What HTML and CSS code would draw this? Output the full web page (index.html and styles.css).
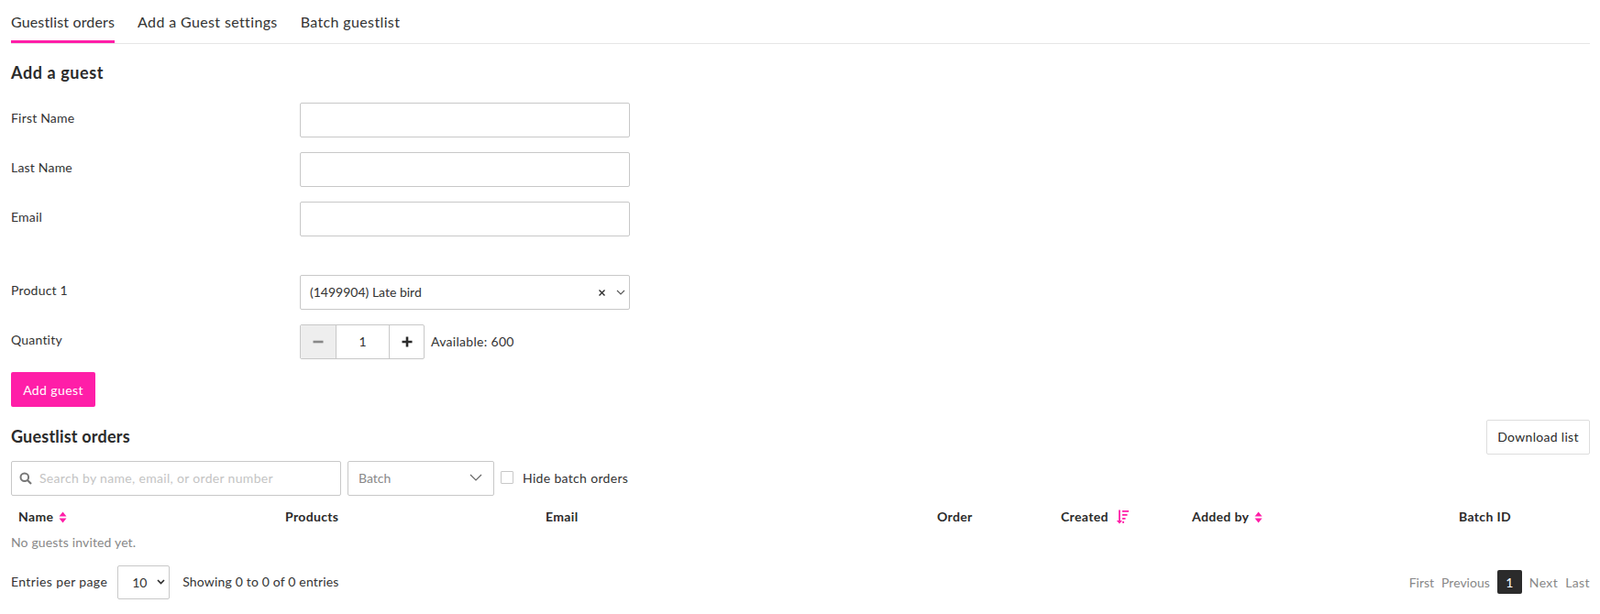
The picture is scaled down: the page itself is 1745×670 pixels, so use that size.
FILE: index.html
```html
<!DOCTYPE html>
<html lang="en">
<head>
<meta charset="utf-8">
<title>Guestlist orders</title>
<link rel="stylesheet" href="styles.css">
</head>
<body>
<main class="page">
  <nav class="tabs">
    <a class="tab active">Guestlist orders</a>
    <a class="tab">Add a Guest settings</a>
    <a class="tab">Batch guestlist</a>
  </nav>

  <h2 class="add-title">Add a guest</h2>
  <form class="form">
    <div class="row"><label>First Name</label><input class="field" type="text"></div>
    <div class="row"><label>Last Name</label><input class="field" type="text"></div>
    <div class="row"><label>Email</label><input class="field" type="text"></div>
    <div class="row product"><label>Product 1</label>
      <div class="field combo">
        <span class="combo-text">(1499904) Late bird</span>
        <svg class="combo-x" width="9" height="9" viewBox="0 0 9 9"><path d="M1.5 1.5l6 6M7.5 1.5l-6 6" stroke="#2b2b2b" stroke-width="1.4" fill="none"/></svg>
        <svg class="combo-chev" width="10" height="6" viewBox="0 0 10 6"><path d="M1 1l4 4 4-4" stroke="#555" stroke-width="1.1" fill="none"/></svg>
      </div>
    </div>
    <div class="row"><label>Quantity</label>
      <div class="qty-wrap">
        <div class="qty">
          <span class="qty-btn minus"><svg width="12" height="12" viewBox="0 0 12 12"><rect x="0.5" y="4.7" width="11" height="2.6" fill="#888"/></svg></span>
          <span class="qty-val">1</span>
          <span class="qty-btn"><svg width="12" height="12" viewBox="0 0 12 12"><path d="M4.7 0.5h2.6v4.2h4.2v2.6H7.3v4.2H4.7V7.3H0.5V4.7h4.2z" fill="#2b2b2b"/></svg></span>
        </div>
        <span class="avail">Available: 600</span>
      </div>
    </div>
    <button class="add-btn" type="button">Add guest</button>
  </form>

  <section class="list">
    <div class="list-head">
      <h2 class="list-title">Guestlist orders</h2>
      <button class="download" type="button">Download list</button>
    </div>
    <div class="filters">
      <div class="search">
        <svg width="14" height="14" viewBox="0 0 14 14"><circle cx="5.8" cy="5.8" r="4.3" stroke="#777" stroke-width="2" fill="none"/><path d="M9 9l4 4" stroke="#777" stroke-width="2.2" fill="none"/></svg>
        <input class="search-input" type="text" placeholder="Search by name, email, or order number">
      </div>
      <div class="batch">
        <span>Batch</span>
        <svg width="14" height="8" viewBox="0 0 14 8"><path d="M1 1l6 6 6-6" stroke="#666" stroke-width="1.2" fill="none"/></svg>
      </div>
      <label class="hide"><span class="check"></span><span class="hide-text">Hide batch orders</span></label>
    </div>
    <table class="grid">
      <colgroup>
        <col class="c-name"><col class="c-products"><col class="c-email"><col class="c-order"><col class="c-created"><col class="c-added"><col class="c-batch">
      </colgroup>
      <thead>
        <tr>
          <th>Name <svg class="sort" width="9" height="13" viewBox="0 0 9 13"><path d="M4.5 0.5L8.5 5.5H0.5zM4.5 12.5L0.5 7.5H8.5z" fill="#ff1ea8"/></svg></th>
          <th>Products</th>
          <th>Email</th>
          <th>Order</th>
          <th>Created <svg class="sort sort-d" width="15" height="16" viewBox="0 0 15 16"><path d="M3 0.5h1.8v11.5H7L3.9 15.5 0.8 12H3z M7 1h7v1.8H7z M7 5h5.5v1.8H7z M7 9h3.5v1.8H7z M7 13h2v1.8H7z" fill="#ff1ea8"/></svg></th>
          <th>Added by <svg class="sort" width="9" height="13" viewBox="0 0 9 13"><path d="M4.5 0.5L8.5 5.5H0.5zM4.5 12.5L0.5 7.5H8.5z" fill="#ff1ea8"/></svg></th>
          <th>Batch ID</th>
        </tr>
      </thead>
    </table>
    <p class="empty">No guests invited yet.</p>
    <div class="foot">
      <span class="per-label">Entries per page</span>
      <div class="per-page"><span>10</span><svg width="9" height="6" viewBox="0 0 9 6"><path d="M1 1l3.5 3.5L8 1" stroke="#2b2b2b" stroke-width="1.6" fill="none"/></svg></div>
      <span class="showing">Showing 0 to 0 of 0 entries</span>
      <div class="pager">
        <a>First</a><a>Previous</a><a class="current">1</a><a>Next</a><a>Last</a>
      </div>
    </div>
  </section>
</main>
</body>
</html>
```
FILE: styles.css
```css
* { box-sizing: border-box; }
html, body { margin: 0; padding: 0; background: #fff; }
body { font-family: Lato, "Liberation Sans", sans-serif; font-size: 14px; color: #333; }
.page { width: 1745px; height: 670px; padding: 0 12px; overflow: hidden; }
.tabs { display: flex; gap: 25px; height: 48px; border-bottom: 1px solid #e6e6e6; width: 1722px; }
.tab { height: 47px; padding-top: 14px; font-size: 16px; line-height: 20px; letter-spacing: 0.37px; }
.tab.active { border-bottom: 3px solid #ff1ea8; letter-spacing: 0.15px; }
h2 { margin: 0; font-size: 18px; font-weight: 700; line-height: 22px; color: #2b2b2b; }
.add-title { margin-top: 20px; letter-spacing: 0.6px; }
.form { display: flex; flex-direction: column; margin-top: 22px; }
.row { display: grid; grid-template-columns: 315px 360px; height: 38px; margin-bottom: 16px; }
.row label { font-size: 14px; line-height: 20px; padding-top: 7px; letter-spacing: 0.2px; }
.row.product { margin-top: 26px; }
.field { width: 360px; height: 38px; border: 1px solid #c8c8c8; border-radius: 2px; background: #fff; }
.combo { display: flex; align-items: center; padding: 0 4px 0 10px; font-size: 14px; }
.combo-text { flex: 1; margin-top: -2px; }
.combo-x { margin-right: 11px; }
.qty-wrap { display: flex; align-items: center; gap: 7px; }
.qty { display: flex; width: 136px; height: 38px; border: 1px solid #c8c8c8; border-radius: 2px; }
.qty-btn { width: 39px; display: flex; align-items: center; justify-content: center; }
.qty-btn.minus { background: #eee; border-right: 1px solid #c8c8c8; }
.qty-val { width: 58px; border-right: 1px solid #c8c8c8; text-align: center; line-height: 36px; font-size: 14px; }
.qty .qty-btn:last-child { width: 37px; }
.avail { font-size: 14px; letter-spacing: 0.3px; margin-top: -2px; }
.add-btn { width: 92px; height: 38px; margin-top: -2px; padding: 0; border: 0; border-radius: 2px; background: #ff1ea8; color: #fff; font: inherit; letter-spacing: 0.4px; }
.list { margin-top: 14px; }
.list-head { display: flex; justify-content: space-between; align-items: center; height: 38px; width: 1722px; }
.list-title { letter-spacing: 0.2px; margin-top: -2px; }
.download { width: 113px; height: 38px; padding: 0 0 2px; border: 1px solid #ddd; border-radius: 2px; background: #fff; color: #2b2b2b; font: inherit; letter-spacing: 0.3px; }
.filters { display: flex; align-items: center; gap: 7px; margin-top: 7px; }
.search { display: flex; align-items: center; gap: 8px; width: 360px; height: 38px; padding: 0 8px; border: 1px solid #c8c8c8; border-radius: 2px; }
.search-input { flex: 1; min-width: 0; border: 0; outline: 0; padding: 0 0 2px; font: inherit; letter-spacing: 0.32px; }
.search-input::placeholder { color: #c4c4c4; opacity: 1; }
.batch { display: flex; align-items: center; justify-content: space-between; width: 160px; height: 38px; padding: 0 12px 2px 11px; border: 1px solid #c8c8c8; border-radius: 2px; color: #888; }
.hide { display: flex; align-items: center; gap: 10px; letter-spacing: 0.33px; }
.hide-text { margin-top: -2px; }
.check { width: 14px; height: 14px; margin-top: -2px; border: 1px solid #c8c8c8; border-radius: 1px; }
.grid { width: 1721px; border-collapse: collapse; table-layout: fixed; margin-top: 12px; }
.c-name { width: 291px; } .c-products { width: 284px; } .c-email { width: 427px; } .c-order { width: 135px; } .c-created { width: 143px; } .c-added { width: 291px; } .c-batch { width: 150px; }
.grid th { text-align: left; padding: 0 8px; height: 22px; font-size: 14px; font-weight: 700; line-height: 20px; white-space: nowrap; letter-spacing: 0.35px; color: #2b2b2b; }
.sort { vertical-align: -2px; margin-left: 2px; }
.sort-d { vertical-align: -3px; margin-left: 4px; }
.empty { margin: 7px 0 0; color: #888; font-size: 14px; line-height: 20px; letter-spacing: 0.15px; }
.foot { display: flex; align-items: center; width: 1722px; margin-top: 14px; height: 38px; }
.per-label { letter-spacing: 0.38px; margin-top: -2px; }
.per-page { display: flex; align-items: center; justify-content: space-between; width: 57px; height: 37px; margin: 0 14px 0 11px; padding: 0 4px 0 15px; border: 1px solid #c8c8c8; border-radius: 2px; }
.showing { letter-spacing: 0.17px; margin-top: -2px; }
.pager { margin-left: auto; display: flex; align-items: center; gap: 8px; color: #888; }
.pager .current { display: flex; align-items: center; justify-content: center; width: 27px; height: 26px; border-radius: 2px; background: #2b2b2b; color: #fff; }
.pager .current ~ a { letter-spacing: 0.4px; }
```
